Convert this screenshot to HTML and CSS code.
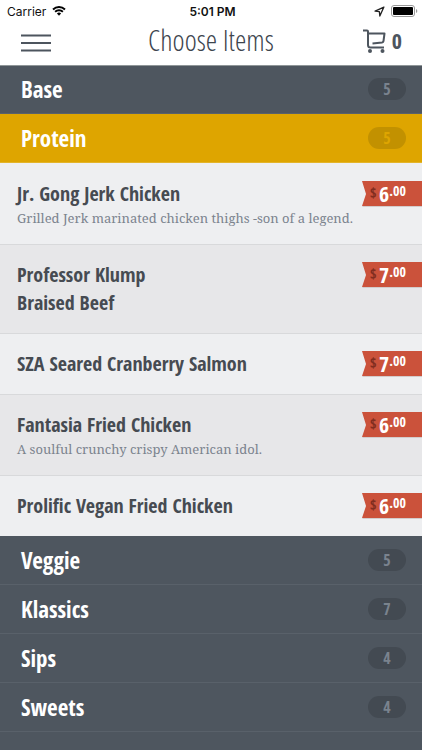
FILE: index.html
```
<!DOCTYPE html>
<html lang="en">
<head>
<meta charset="utf-8">
<meta name="viewport" content="width=device-width, initial-scale=1">
<title>Choose Items</title>
<link rel="stylesheet" href="styles.css">
</head>
<body>
<header class="top">
  <div class="status">
    <div class="status-side">
      <span>Carrier</span>
      <svg class="wifi" width="14" height="10" viewBox="0 0 14 10" aria-hidden="true"><path d="M1 3.5a8.6 8.6 0 0 1 12 0M3.1 5.8a5.6 5.6 0 0 1 7.800 0" fill="none" stroke="#000" stroke-width="1.9"/><path d="M4.9 7.5a3 3 0 0 1 4.200 0L7 9.800z"/></svg>
    </div>
    <span class="time">5:01 PM</span>
    <div class="status-side status-end">
      <svg width="11" height="11" viewBox="0 0 10 10" aria-hidden="true"><path d="M9 1 1 4.700l3.900.5.4 3.900z" fill="none" stroke="#222" stroke-width="1.200" stroke-linejoin="round"/></svg>
      <svg width="27" height="12" viewBox="0 0 27 12" aria-hidden="true"><rect x=".5" y=".5" width="23" height="11" rx="2.500" fill="none" stroke="#999"/><rect x="2" y="2" width="20" height="8" rx="1"/><path d="M25 4v4q1.300-.6 1.300-2T25 4" fill="#999"/></svg>
    </div>
  </div>
  <div class="bar">
    <button class="menu" type="button" aria-label="Menu"><svg width="32" height="18" viewBox="0 0 32 18"><path d="M1 1.500h30M1 9h30M1 16.500h30" stroke="#4d555e" stroke-width="2"/></svg></button>
    <h1>Choose Items</h1>
    <button class="cart" type="button" aria-label="Cart, 0 items"><svg width="25" height="24" viewBox="0 0 25 24"><path d="M1 1.500h4q1 0 1 1V16q0 2.500 2.500 2.500H22M6 4.500h16.500L21.500 12q-.2 1.300-1.500 1.500l-9.500 1" fill="none" stroke="#4d555e" stroke-width="2" stroke-linejoin="round"/><circle cx="8" cy="22" r="2" fill="#4d555e"/><circle cx="20.500" cy="22" r="2" fill="#4d555e"/></svg><span>0</span></button>
  </div>
</header>
<main>
  <button class="section" type="button"><span>Base</span><span class="count">5</span></button>
  <button class="section active" type="button" aria-expanded="true"><span>Protein</span><span class="count">5</span></button>
  <ul class="items">
    <li><div><h2>Jr. Gong Jerk Chicken</h2><p>Grilled Jerk marinated chicken thighs -son of a legend.</p></div><span class="price"><i>$</i><b>6</b><small>.00</small></span></li>
    <li><div><h2>Professor Klump<br>Braised Beef</h2></div><span class="price"><i>$</i><b>7</b><small>.00</small></span></li>
    <li><div><h2>SZA Seared Cranberry Salmon</h2></div><span class="price"><i>$</i><b>7</b><small>.00</small></span></li>
    <li><div><h2>Fantasia Fried Chicken</h2><p>A soulful crunchy crispy American idol.</p></div><span class="price"><i>$</i><b>6</b><small>.00</small></span></li>
    <li><div><h2>Prolific Vegan Fried Chicken</h2></div><span class="price"><i>$</i><b>6</b><small>.00</small></span></li>
  </ul>
  <button class="section" type="button"><span>Veggie</span><span class="count">5</span></button>
  <button class="section" type="button"><span>Klassics</span><span class="count">7</span></button>
  <button class="section" type="button"><span>Sips</span><span class="count">4</span></button>
  <button class="section" type="button"><span>Sweets</span><span class="count">4</span></button>
</main>
</body>
</html>
```
FILE: styles.css
```
* { box-sizing: border-box; }
body {
  margin: 0;
  min-height: 100vh;
  background: #4e565f;
  color: #464b52;
  font-family: "Open Sans Condensed", "Open Sans", sans-serif;
}
h1, h2, p, ul { margin: 0; padding: 0; }
button { margin: 0; padding: 0; border: 0; background: none; font: inherit; color: inherit; }
svg { display: block; }
.top { position: relative; height: 65px; background: #fff; box-shadow: 0 1px 0 #8f9698; }
.status {
  display: grid;
  grid-template-columns: 1fr auto 1fr;
  align-items: center;
  height: 22px;
  padding: 0 4px 0 7px;
  color: #111;
  font-family: Inter, sans-serif;
  font-size: 12px;
}
.status-side { display: flex; align-items: center; gap: 6px; }
.status-end { justify-content: flex-end; }
.time { font-weight: 600; }
.bar {
  display: grid;
  grid-template-columns: 1fr auto 1fr;
  align-items: center;
  height: 38px;
  padding: 0 20px;
  color: #4d555e;
}
.menu { justify-self: start; padding-top: 4px; }
.bar h1 {
  color: #3d454e;
  font-family: "Open Sans Condensed Light", "Open Sans Condensed", sans-serif;
  font-size: 29px;
  font-weight: 300;
  line-height: 34px;
  padding-bottom: 2px;
}
.cart { display: flex; align-items: center; justify-self: end; gap: 5px; font-size: 22px; font-weight: 700; line-height: 24px; }
.cart span { padding-bottom: 2px; }
.section {
  display: flex;
  align-items: center;
  justify-content: space-between;
  width: 100%;
  height: 49px;
  padding: 0 16px 0 21px;
  border-bottom: 1px solid #59616a;
  background: #4e565f;
  color: #fff;
  font-size: 23px;
  font-weight: 700;
  line-height: 30px;
}
.count {
  width: 38px;
  border-radius: 11px;
  background: #434a52;
  color: #7a838e;
  font-size: 16px;
  line-height: 22px;
  text-align: center;
}
.active { border-color: #e3b429; background: #dea500; }
.active .count { background: #c29100; color: #dea500; }
.items { padding-top: 1px; background: #eeeff1; list-style: none; }
.items li {
  display: flex;
  align-items: flex-start;
  justify-content: space-between;
  padding: 16px 0 16px 17px;
  border-bottom: 1px solid #d8d9db;
}
.items li > div { flex: 1; min-width: 0; }
.items li:nth-child(even) { background: #e7e7e9; }
.items li:last-child { border-bottom: 0; }
h2 { font-size: 20px; font-weight: 700; line-height: 28px; }
.items p { color: #7b838e; font-family: "Noto Serif", "Liberation Serif", serif; font-size: 13px; line-height: 20px; }
.price {
  display: flex;
  flex: 0 0 60px;
  height: 26px;
  margin: 1px 0 0 -14px;
  padding-left: 8px;
  background: linear-gradient(#cb523b 25px, #d3cccc 25px);
  clip-path: polygon(0 0, 100% 0, 100% 100%, 1px 100%, 0 25px, 4px 50%);
  color: #fff;
  line-height: 24px;
}
.price i { width: 9px; color: #812d1f; font-size: 14px; font-style: normal; font-weight: 700; }
.price b { font-size: 22px; }
.price small { font-size: 14px; font-weight: 700; line-height: 20px; }
```
